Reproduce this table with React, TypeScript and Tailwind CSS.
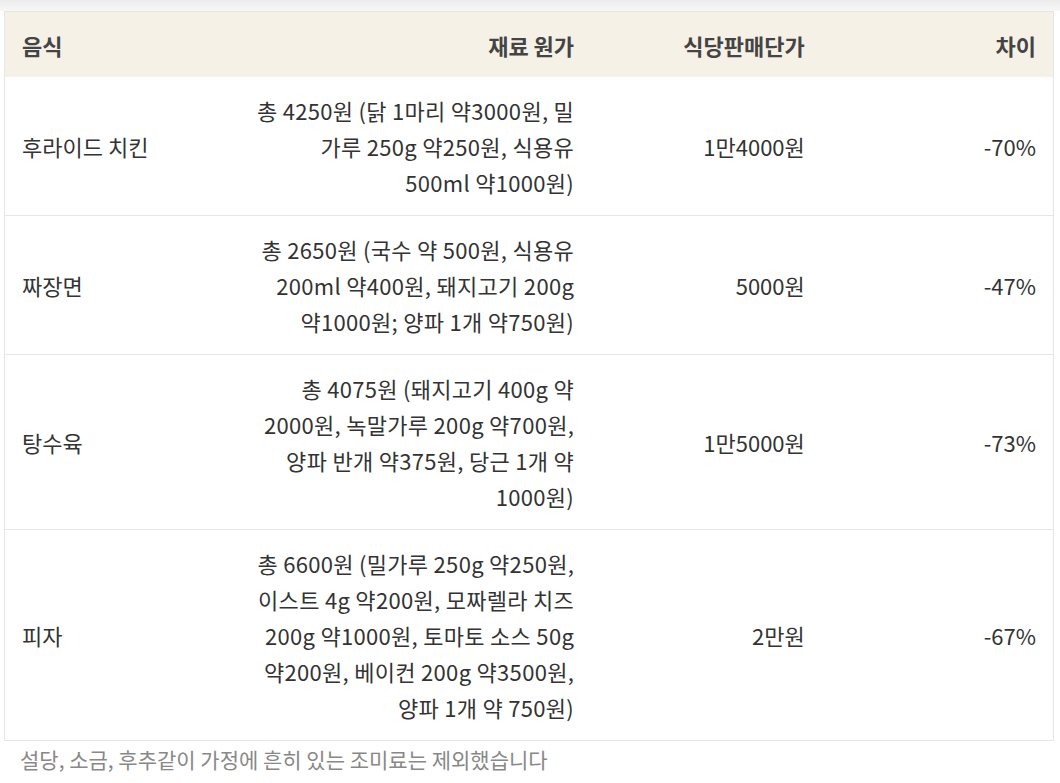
import React from "react";

type Row = {
  food: string;
  cost: string[];
  price: string;
  diff: string;
};

const rows: Row[] = [
  {
    food: "후라이드 치킨",
    cost: ["총 4250원 (닭 1마리 약3000원, 밀", "가루 250g 약250원, 식용유", "500ml 약1000원)"],
    price: "1만4000원",
    diff: "-70%",
  },
  {
    food: "짜장면",
    cost: ["총 2650원 (국수 약 500원, 식용유", "200ml 약400원, 돼지고기 200g", "약1000원; 양파 1개 약750원)"],
    price: "5000원",
    diff: "-47%",
  },
  {
    food: "탕수육",
    cost: ["총 4075원 (돼지고기 400g 약", "2000원, 녹말가루 200g 약700원,", "양파 반개 약375원, 당근 1개 약", "1000원)"],
    price: "1만5000원",
    diff: "-73%",
  },
  {
    food: "피자",
    cost: [
      "총 6600원 (밀가루 250g 약250원,",
      "이스트 4g 약200원, 모짜렐라 치즈",
      "200g 약1000원, 토마토 소스 50g",
      "약200원, 베이컨 200g 약3500원,",
      "양파 1개 약 750원)",
    ],
    price: "2만원",
    diff: "-67%",
  },
];

export default function App() {
  return (
    <div className="min-h-[783px] w-[1060px] bg-white font-['Noto_Sans_CJK_KR','Noto_Sans',sans-serif] text-[22px] leading-[36px] text-[#333]">
      <div className="h-[11px] bg-gradient-to-b from-[#ececec] to-[#f7f7f7]" />
      <div className="ml-[4px] w-[1050px]">
        <table className="w-full border-collapse border border-[#e6e6e6]">
          <colgroup>
            <col className="w-[230px]" />
            <col className="w-[357px]" />
            <col className="w-[231px]" />
            <col className="w-[232px]" />
          </colgroup>
          <thead>
            <tr className="bg-[#f6f1e7] text-[#444] font-bold">
              <th className="px-[17px] pt-[15px] pb-[14px] text-left font-bold">음식</th>
              <th className="px-[17px] pt-[15px] pb-[14px] text-right font-bold">재료 원가</th>
              <th className="px-[17px] pt-[15px] pb-[14px] text-right font-bold">식당판매단가</th>
              <th className="px-[17px] pt-[15px] pb-[14px] text-right font-bold">차이</th>
            </tr>
          </thead>
          <tbody>
            {rows.map((r) => (
              <tr key={r.food} className="border-b border-[#e6e6e6]">
                <td className="px-[17px] py-[15px] text-left align-middle">{r.food}</td>
                <td className="px-[17px] py-[15px] text-right align-middle">
                  {r.cost.map((line, i) => (
                    <div key={i} className="whitespace-nowrap tracking-[0.3px]">
                      {line}
                    </div>
                  ))}
                </td>
                <td className="px-[17px] py-[15px] text-right align-middle">{r.price}</td>
                <td className="px-[17px] py-[15px] text-right align-middle">{r.diff}</td>
              </tr>
            ))}
          </tbody>
        </table>
        <p className="mt-[1px] pl-[16px] text-[21px] leading-[34px] text-[#888]">
          설당, 소금, 후추같이 가정에 흔히 있는 조미료는 제외했습니다
        </p>
      </div>
    </div>
  );
}
